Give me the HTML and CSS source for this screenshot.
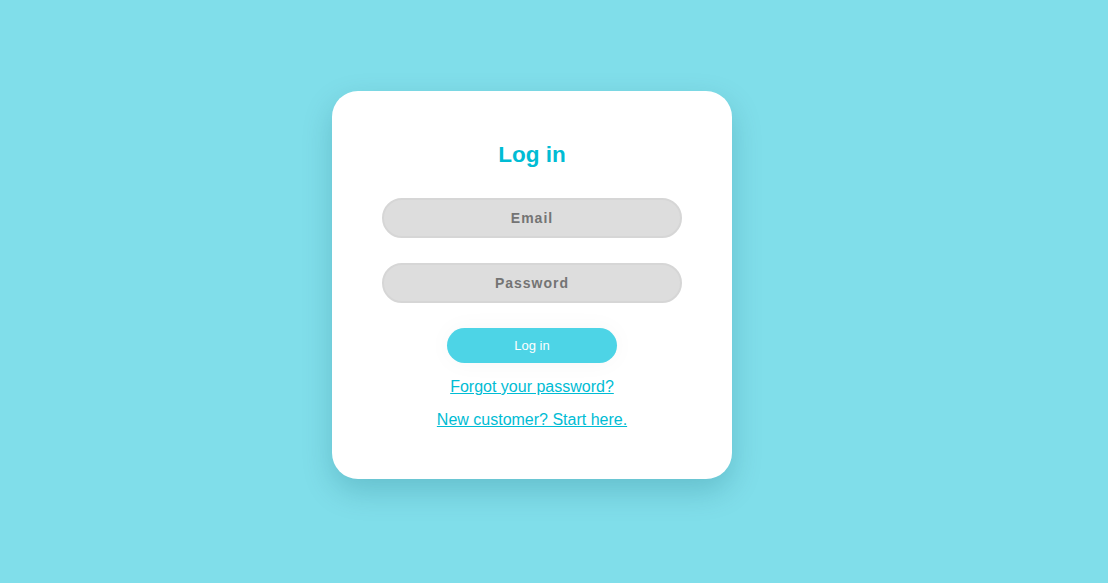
FILE: index.html
```html
<!DOCTYPE html>
<html lang="en">
<head>
<meta charset="utf-8">
<title>Log in</title>
<link rel="stylesheet" href="styles.css">
</head>
<body>
<main class="page">
  <form class="card">
    <h1 class="title">Log in</h1>
    <input class="field" type="email" placeholder="Email">
    <input class="field" type="password" placeholder="Password">
    <button class="btn" type="button">Log in</button>
    <a class="link" href="#">Forgot your password?</a>
    <a class="link" href="#">New customer? Start here.</a>
  </form>
</main>
</body>
</html>
```
FILE: styles.css
```css
html, body {
  margin: 0;
  padding: 0;
}
body {
  background: #80deea;
  font-family: "Liberation Sans", Arial, sans-serif;
  min-height: 100vh;
}
.page {
  padding: 91px 0 0 332px;
}
.card {
  box-sizing: border-box;
  width: 400px;
  height: 388px;
  background: #fff;
  border-radius: 26px;
  box-shadow: 0 12px 30px rgba(0, 80, 100, 0.22);
  padding: 51px 50px 0;
  display: flex;
  flex-direction: column;
  align-items: center;
}
.card > * {
  flex-shrink: 0;
}
.title {
  margin: 0 0 31px;
  font-size: 22.5px;
  font-weight: bold;
  color: #00bcd4;
  line-height: 25px;
}
.field {
  box-sizing: border-box;
  width: 300px;
  height: 40px;
  margin: 0 0 25px;
  border: 2px solid #d6d6d6;
  border-radius: 20px;
  background: #dddddd;
  text-align: center;
  font-family: "Liberation Sans", Arial, sans-serif;
  font-size: 14px;
  font-weight: bold;
  letter-spacing: 1px;
  color: #747474;
  outline: none;
}
.field::placeholder {
  color: #747474;
  opacity: 1;
}
.btn {
  width: 170px;
  height: 35px;
  border: none;
  border-radius: 18px;
  background: #4dd4e6;
  color: #fff;
  font-family: "Liberation Sans", Arial, sans-serif;
  font-size: 13px;
  box-shadow: 0 0 24px rgba(0, 0, 0, 0.035);
  margin: 0 0 15px;
  cursor: pointer;
}
.link {
  font-size: 16px;
  line-height: 18px;
  color: #00bcd4;
  text-decoration: underline;
}
.link + .link {
  margin-top: 15px;
}
```
